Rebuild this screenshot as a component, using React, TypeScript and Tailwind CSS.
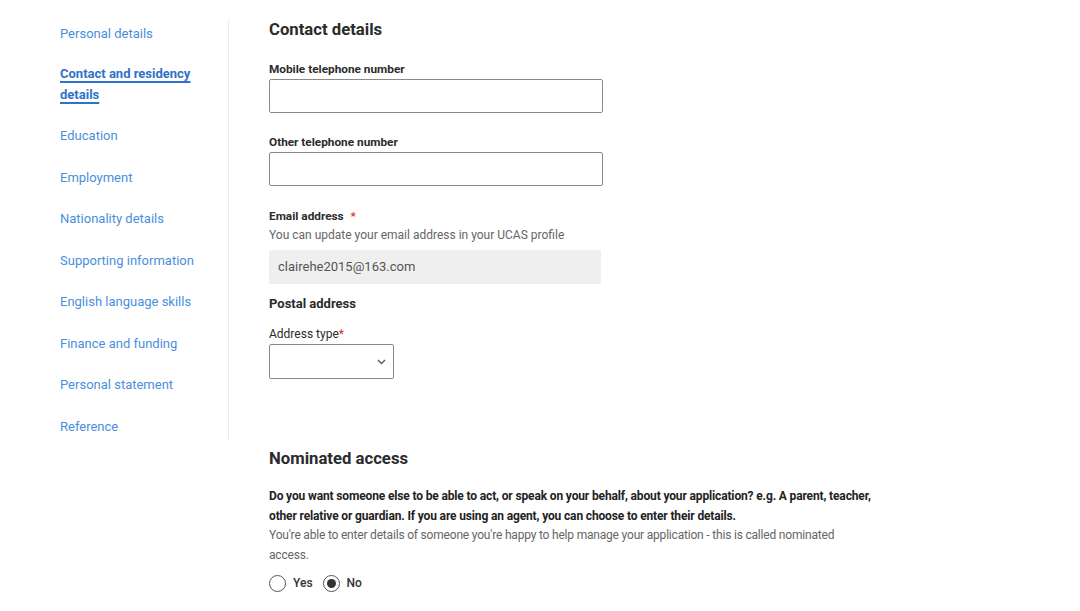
const navItems = [
  'Personal details',
  'Contact and residency details',
  'Education',
  'Employment',
  'Nationality details',
  'Supporting information',
  'English language skills',
  'Finance and funding',
  'Personal statement',
  'Reference',
];

const Field = ({ label }: { label: string }) => (
  <div className="flex flex-col">
    <label className="text-[11.8px] leading-[16px] font-bold text-[#2b2b2b]">{label}</label>
    <input
      type="text"
      className="mt-[2px] h-[34px] w-[334px] rounded-[2px] border border-[#8a8a8a] bg-white"
    />
  </div>
);

const App = () => {
  return (
    <div className="flex min-h-[611px] w-full bg-white font-['Roboto',sans-serif] text-[#2b2b2b]">
      <nav className="mt-5 flex h-[420px] w-[229px] shrink-0 flex-col gap-[20.5px] border-r border-[#ececec] pl-[60px] pt-[3px]">
        {navItems.map((item) =>
          item === 'Contact and residency details' ? (
            <a
              key={item}
              href="#"
              className="-mt-[2px] w-[140px] text-[13px] leading-[21px] font-bold text-[#2f72c9] underline decoration-2 underline-offset-[3px]"
            >
              {item}
            </a>
          ) : (
            <a key={item} href="#" className="text-[13px] leading-[21px] text-[#4a8fdc]">
              {item}
            </a>
          )
        )}
      </nav>

      <main className="flex flex-col pl-[40px] pt-[20px]">
        <h2 className="text-[16.7px] leading-[20px] font-bold text-[#2b2b2b]">Contact details</h2>

        <div className="mt-[21px]">
          <Field label="Mobile telephone number" />
        </div>
        <div className="mt-[21px]">
          <Field label="Other telephone number" />
        </div>

        <div className="mt-[22px] flex flex-col">
          <span className="text-[11.8px] leading-[16px] font-bold">
            Email address <span className="ml-1 text-[#d4351c]">*</span>
          </span>
          <span className="mt-[3px] text-[12px] leading-[16px] text-[#666]">
            You can update your email address in your UCAS profile
          </span>
          <div className="mt-[7px] flex h-[34px] w-[332px] items-center rounded-[2px] bg-[#efefef] pl-[9px] text-[13px] text-[#555]">
            clairehe2015@163.com
          </div>
        </div>

        <h3 className="mt-3 text-[13px] leading-[16px] font-bold">Postal address</h3>

        <div className="mt-[14px] flex flex-col">
          <span className="text-[12px] leading-[16px]">
            Address type<span className="text-[#d4351c]">*</span>
          </span>
          <div className="mt-[2px] flex h-[35px] w-[125px] items-center justify-end rounded-[2px] border border-[#8a8a8a] pr-[7px]">
            <svg width="9" height="6" viewBox="0 0 9 6" fill="none">
              <path d="M1 1l3.5 3.5L8 1" stroke="#555" strokeWidth="1.3" />
            </svg>
          </div>
        </div>

        <h2 className="mt-[69px] text-[16.7px] leading-[21px] font-bold">Nominated access</h2>

        <p className="mt-[17px] w-[620px] text-[12px] leading-[20px] font-bold tracking-[-0.012em] text-[#222]">
          Do you want someone else to be able to act, or speak on your behalf, about your application? e.g. A parent, teacher,
          other relative or guardian. If you are using an agent, you can choose to enter their details.
        </p>
        <p className="w-[600px] text-[12px] leading-[19.5px] tracking-[-0.016em] text-[#666]">
          You're able to enter details of someone you're happy to help manage your application - this is called nominated
          access.
        </p>

        <div className="mt-[9px] flex items-center text-[12px] font-medium text-[#333]">
          <span className="h-[17px] w-[17px] rounded-full border border-[#555]" />
          <span className="ml-[7px]">Yes</span>
          <span className="ml-[10px] flex h-[17px] w-[17px] items-center justify-center rounded-full border border-[#555]">
            <span className="h-[9px] w-[9px] rounded-full bg-[#333]" />
          </span>
          <span className="ml-[7px]">No</span>
        </div>
      </main>
    </div>
  );
};

export default App;
